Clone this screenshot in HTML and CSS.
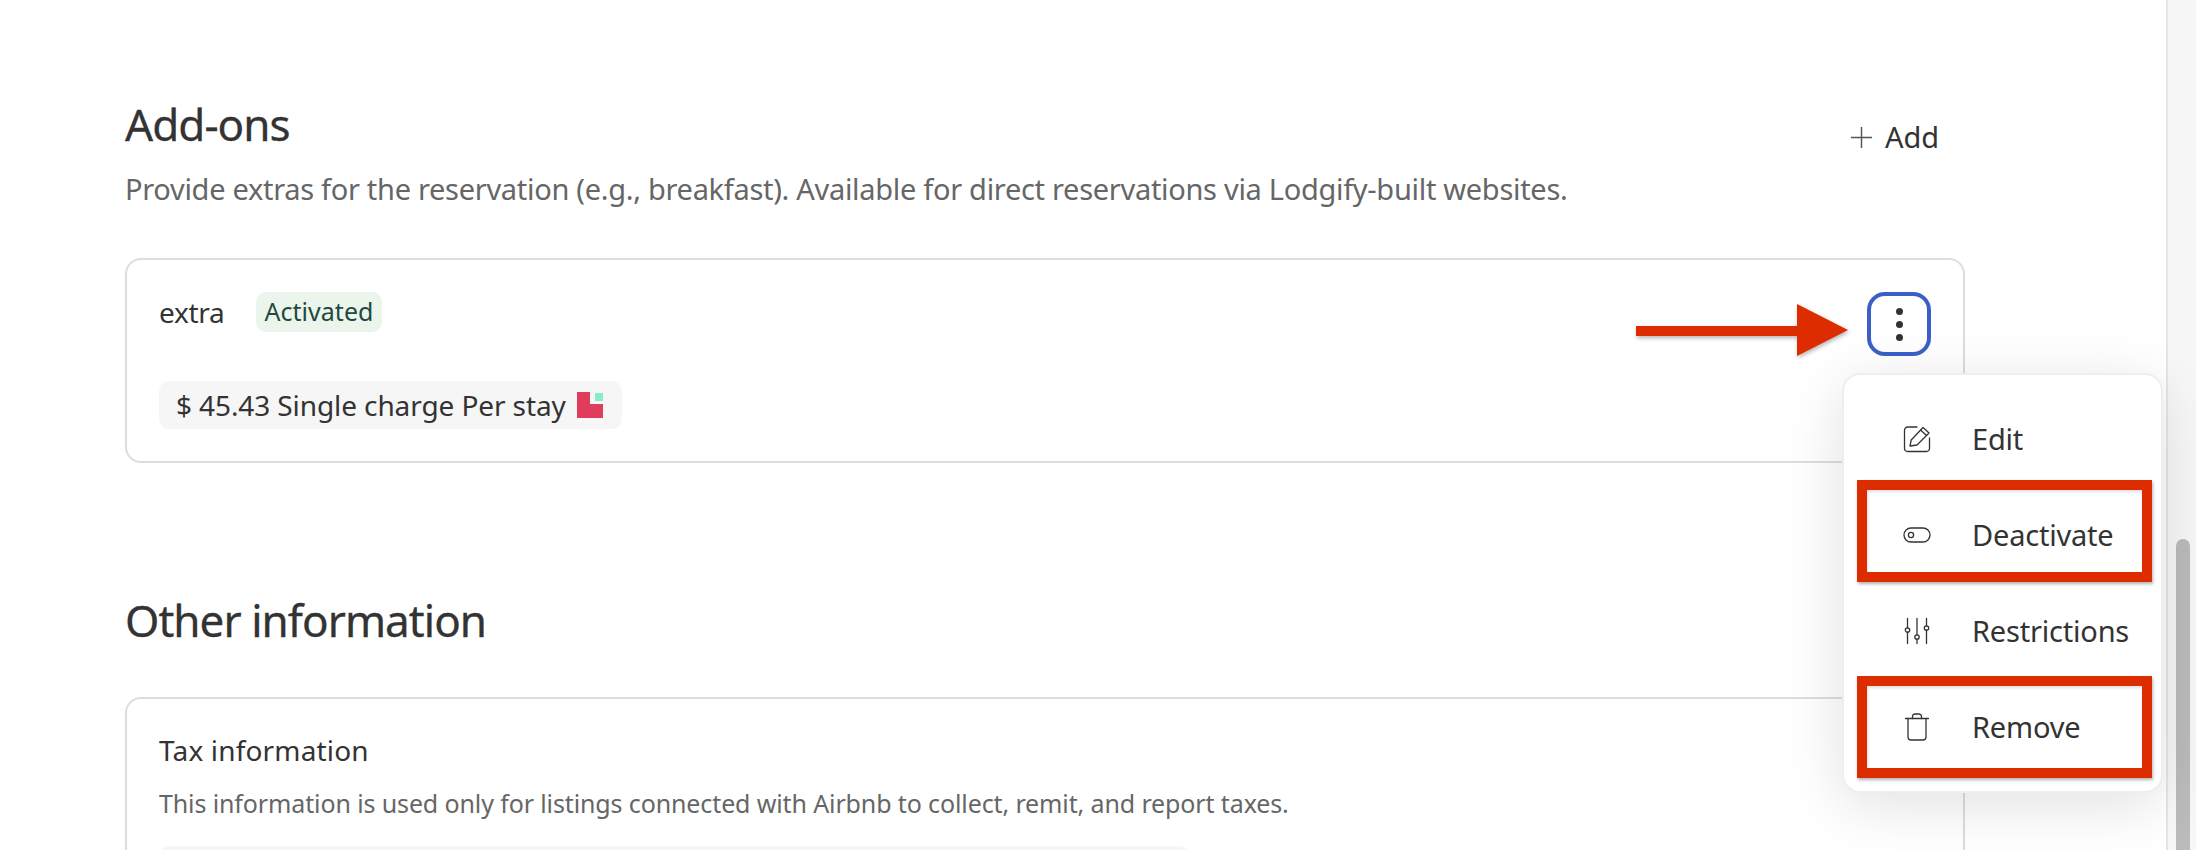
FILE: index.html
```html
<!DOCTYPE html>
<html lang="en">
<head>
<meta charset="utf-8">
<title>Add-ons</title>
<link rel="stylesheet" href="styles.css">
</head>
<body>
<div class="page">
  <main class="main">
    <section class="addons">
      <div class="section-head">
        <div>
          <h2 class="title">Add-ons</h2>
          <p class="lead">Provide extras for the reservation (e.g., breakfast). Available for direct reservations via Lodgify-built websites.</p>
        </div>
        <button class="add-btn" type="button">
          <svg class="plus" viewBox="0 0 22 22" aria-hidden="true"><path d="M11 0v22M0 11h22"/></svg>
          <span>Add</span>
        </button>
      </div>
      <div class="card addon-card">
        <div class="addon-body">
          <div class="addon-name-row">
            <span class="addon-name">extra</span>
            <span class="badge">Activated</span>
          </div>
          <div class="price-pill">
            <span>$ 45.43 Single charge Per stay</span>
            <svg class="brand" viewBox="0 0 26 26" aria-hidden="true">
              <path class="brand-red" d="M0 0h13v12h13v14H0z"/>
              <rect class="brand-green" x="18" y="1" width="8" height="8"/>
            </svg>
          </div>
        </div>
        <button class="kebab" type="button" aria-label="More actions">
          <i></i><i></i><i></i>
        </button>
      </div>
    </section>

    <section class="other">
      <h2 class="title">Other information</h2>
      <div class="card tax-card">
        <h3 class="tax-title">Tax information</h3>
        <p class="tax-text">This information is used only for listings connected with Airbnb to collect, remit, and report taxes.</p>
        <div class="tax-field"></div>
      </div>
    </section>
  </main>

  <aside class="scrollbar"><div class="thumb"></div></aside>

  <svg class="arrow" viewBox="0 0 212 52" aria-hidden="true"><path d="M0 22h161V0l51 26-51 26V32H0z"/></svg>

  <div class="menu">
    <div class="menu-item">
      <svg class="menu-icon" viewBox="0 0 28 28" aria-hidden="true">
        <path d="M14 2H5a3.500 3.500 0 0 0-3.500 3.500v18A3 3 0 0 0 4.500 26.500h19a3 3 0 0 0 3-3V13"/>
        <path d="M7 21l1.200-6L20 2.500l6 5.500L14 20z"/>
        <path d="M17.500 5l6 5.500"/>
      </svg>
      <span>Edit</span>
    </div>
    <div class="menu-item">
      <svg class="menu-icon" viewBox="0 0 28 28" aria-hidden="true">
        <rect x="1" y="7" width="26" height="14" rx="7"/>
        <circle cx="8" cy="14" r="2.600"/>
      </svg>
      <span>Deactivate</span>
    </div>
    <div class="menu-item">
      <svg class="menu-icon" viewBox="0 0 28 28" aria-hidden="true">
        <path d="M4.500 1.500v9.300M4.500 15.200v11.300M14 1.500v16.300M14 22.200v4.300M23.500 1.500v7.300M23.500 13.200v13.300"/>
        <circle cx="4.500" cy="13" r="2.200"/>
        <circle cx="14" cy="20" r="2.200"/>
        <circle cx="23.500" cy="11" r="2.200"/>
      </svg>
      <span>Restrictions</span>
    </div>
    <div class="menu-item">
      <svg class="menu-icon" viewBox="0 0 28 28" aria-hidden="true">
        <path d="M2.500 5.500h23M5 5.500V24a3 3 0 0 0 3 3h12a3 3 0 0 0 3-3V5.500"/>
        <path d="M9.500 5.500V3.500a2.500 2.500 0 0 1 2.500-2.500h4a2.500 2.500 0 0 1 2.500 2.500v2"/>
      </svg>
      <span>Remove</span>
    </div>
    <div class="callout callout-deactivate"></div>
    <div class="callout callout-remove"></div>
  </div>
</div>
</body>
</html>
```
FILE: styles.css
```css
* { box-sizing: border-box; }
html, body { margin: 0; height: 100%; overflow: hidden; background: #fff; }
body { font-family: "Noto Sans", "Liberation Sans", sans-serif; color: #333; }
.page { position: relative; display: flex; width: 2196px; height: 850px; overflow: hidden; }
.main { flex: 1; padding: 0 201px 0 125px; }
.title { margin: 0; font-size: 44px; line-height: 56px; font-weight: 400; color: #333; letter-spacing: -0.95px; -webkit-text-stroke: 0.3px #333; }
.section-head { display: flex; justify-content: space-between; align-items: flex-start; padding-top: 96px; }
.lead { margin: 17px 0 0; font-size: 29px; line-height: 40px; color: #666; letter-spacing: -0.3px; white-space: nowrap; }
.add-btn { display: flex; align-items: center; gap: 13px; margin: 21px 26px 0 0; padding: 0; border: 0; background: none; font: inherit; font-size: 29px; line-height: 40px; color: #333; letter-spacing: -0.1px; }
.plus { width: 21px; height: 21px; fill: none; stroke: #555; stroke-width: 1.500; }
.card { border: 2px solid #ddd; border-radius: 16px; background: #fff; }
.addon-card { display: flex; justify-content: space-between; margin-top: 49px; height: 205px; padding: 32px 32px 0 32px; }
.addon-name-row { display: flex; align-items: center; gap: 32px; }
.addon-name { font-size: 28px; line-height: 40px; color: #333; letter-spacing: -0.3px; }
.badge { padding: 0 8px; height: 40px; line-height: 38px; border-radius: 10px; background: #ebf5ec; color: #1f4a3f; font-size: 25px; letter-spacing: 0.05px; }
.price-pill { display: inline-flex; align-items: center; gap: 11px; margin-top: 49px; height: 48px; padding: 0 19px 0 17px; border-radius: 10px; background: #f6f6f6; font-size: 28px; line-height: 40px; color: #333; letter-spacing: -0.1px; }
.brand { width: 26px; height: 26px; }
.brand-red { fill: #e03c5c; }
.brand-green { fill: #85eec6; }
.kebab { display: flex; flex-direction: column; align-items: center; justify-content: center; gap: 6px; width: 64px; height: 64px; padding: 0; border: 4px solid #3a60c8; border-radius: 18px; background: #fff; }
.kebab i { display: block; width: 7px; height: 7px; border-radius: 50%; background: #333; }
.other { margin-top: 129px; }
.tax-card { margin-top: 49px; height: 300px; padding: 31px 32px 0; }
.tax-title { margin: 0; font-size: 28px; line-height: 40px; font-weight: 400; color: #333; letter-spacing: 0.17px; }
.tax-text { margin: 13px 0 0; font-size: 25px; line-height: 40px; color: #666; letter-spacing: -0.12px; white-space: nowrap; }
.tax-field { width: 1030px; height: 48px; margin-top: 23px; border-radius: 10px; background: #f6f6f6; }
.scrollbar { flex: none; width: 30px; height: 850px; padding: 539px 6px 0 8px; background: #f7f7f7; border-left: 2px solid #e6e6e6; }
.thumb { height: 320px; border-radius: 8px 8px 0 0; background: #bbb; }
.arrow { position: absolute; left: 1636px; top: 304px; width: 212px; height: 52px; fill: #dd2c00; filter: drop-shadow(1px 2px 2px rgba(0,0,0,.3)); }
.menu { position: absolute; left: 1842px; top: 373px; width: 321px; height: 420px; padding: 16px 0; border: 2px solid #eee; border-radius: 18px; background: #fff; box-shadow: 0 12px 60px rgba(0,0,0,.12); }
.menu-item { display: flex; align-items: center; gap: 41px; height: 96px; padding-left: 59px; font-size: 29px; color: #333; letter-spacing: -0.2px; }
.menu-item span { margin-bottom: 2px; }
.menu-icon { flex: none; width: 28px; height: 28px; fill: none; stroke: #333; stroke-width: 1.300; stroke-linecap: round; stroke-linejoin: round; }
.callout { position: absolute; left: 13px; width: 295px; height: 102px; border: 10px solid #dd2c00; box-shadow: 1px 2px 3px rgba(0,0,0,.3), inset 1px 2px 3px rgba(0,0,0,.12); }
.callout-deactivate { top: 105px; }
.callout-remove { top: 301px; }
```
